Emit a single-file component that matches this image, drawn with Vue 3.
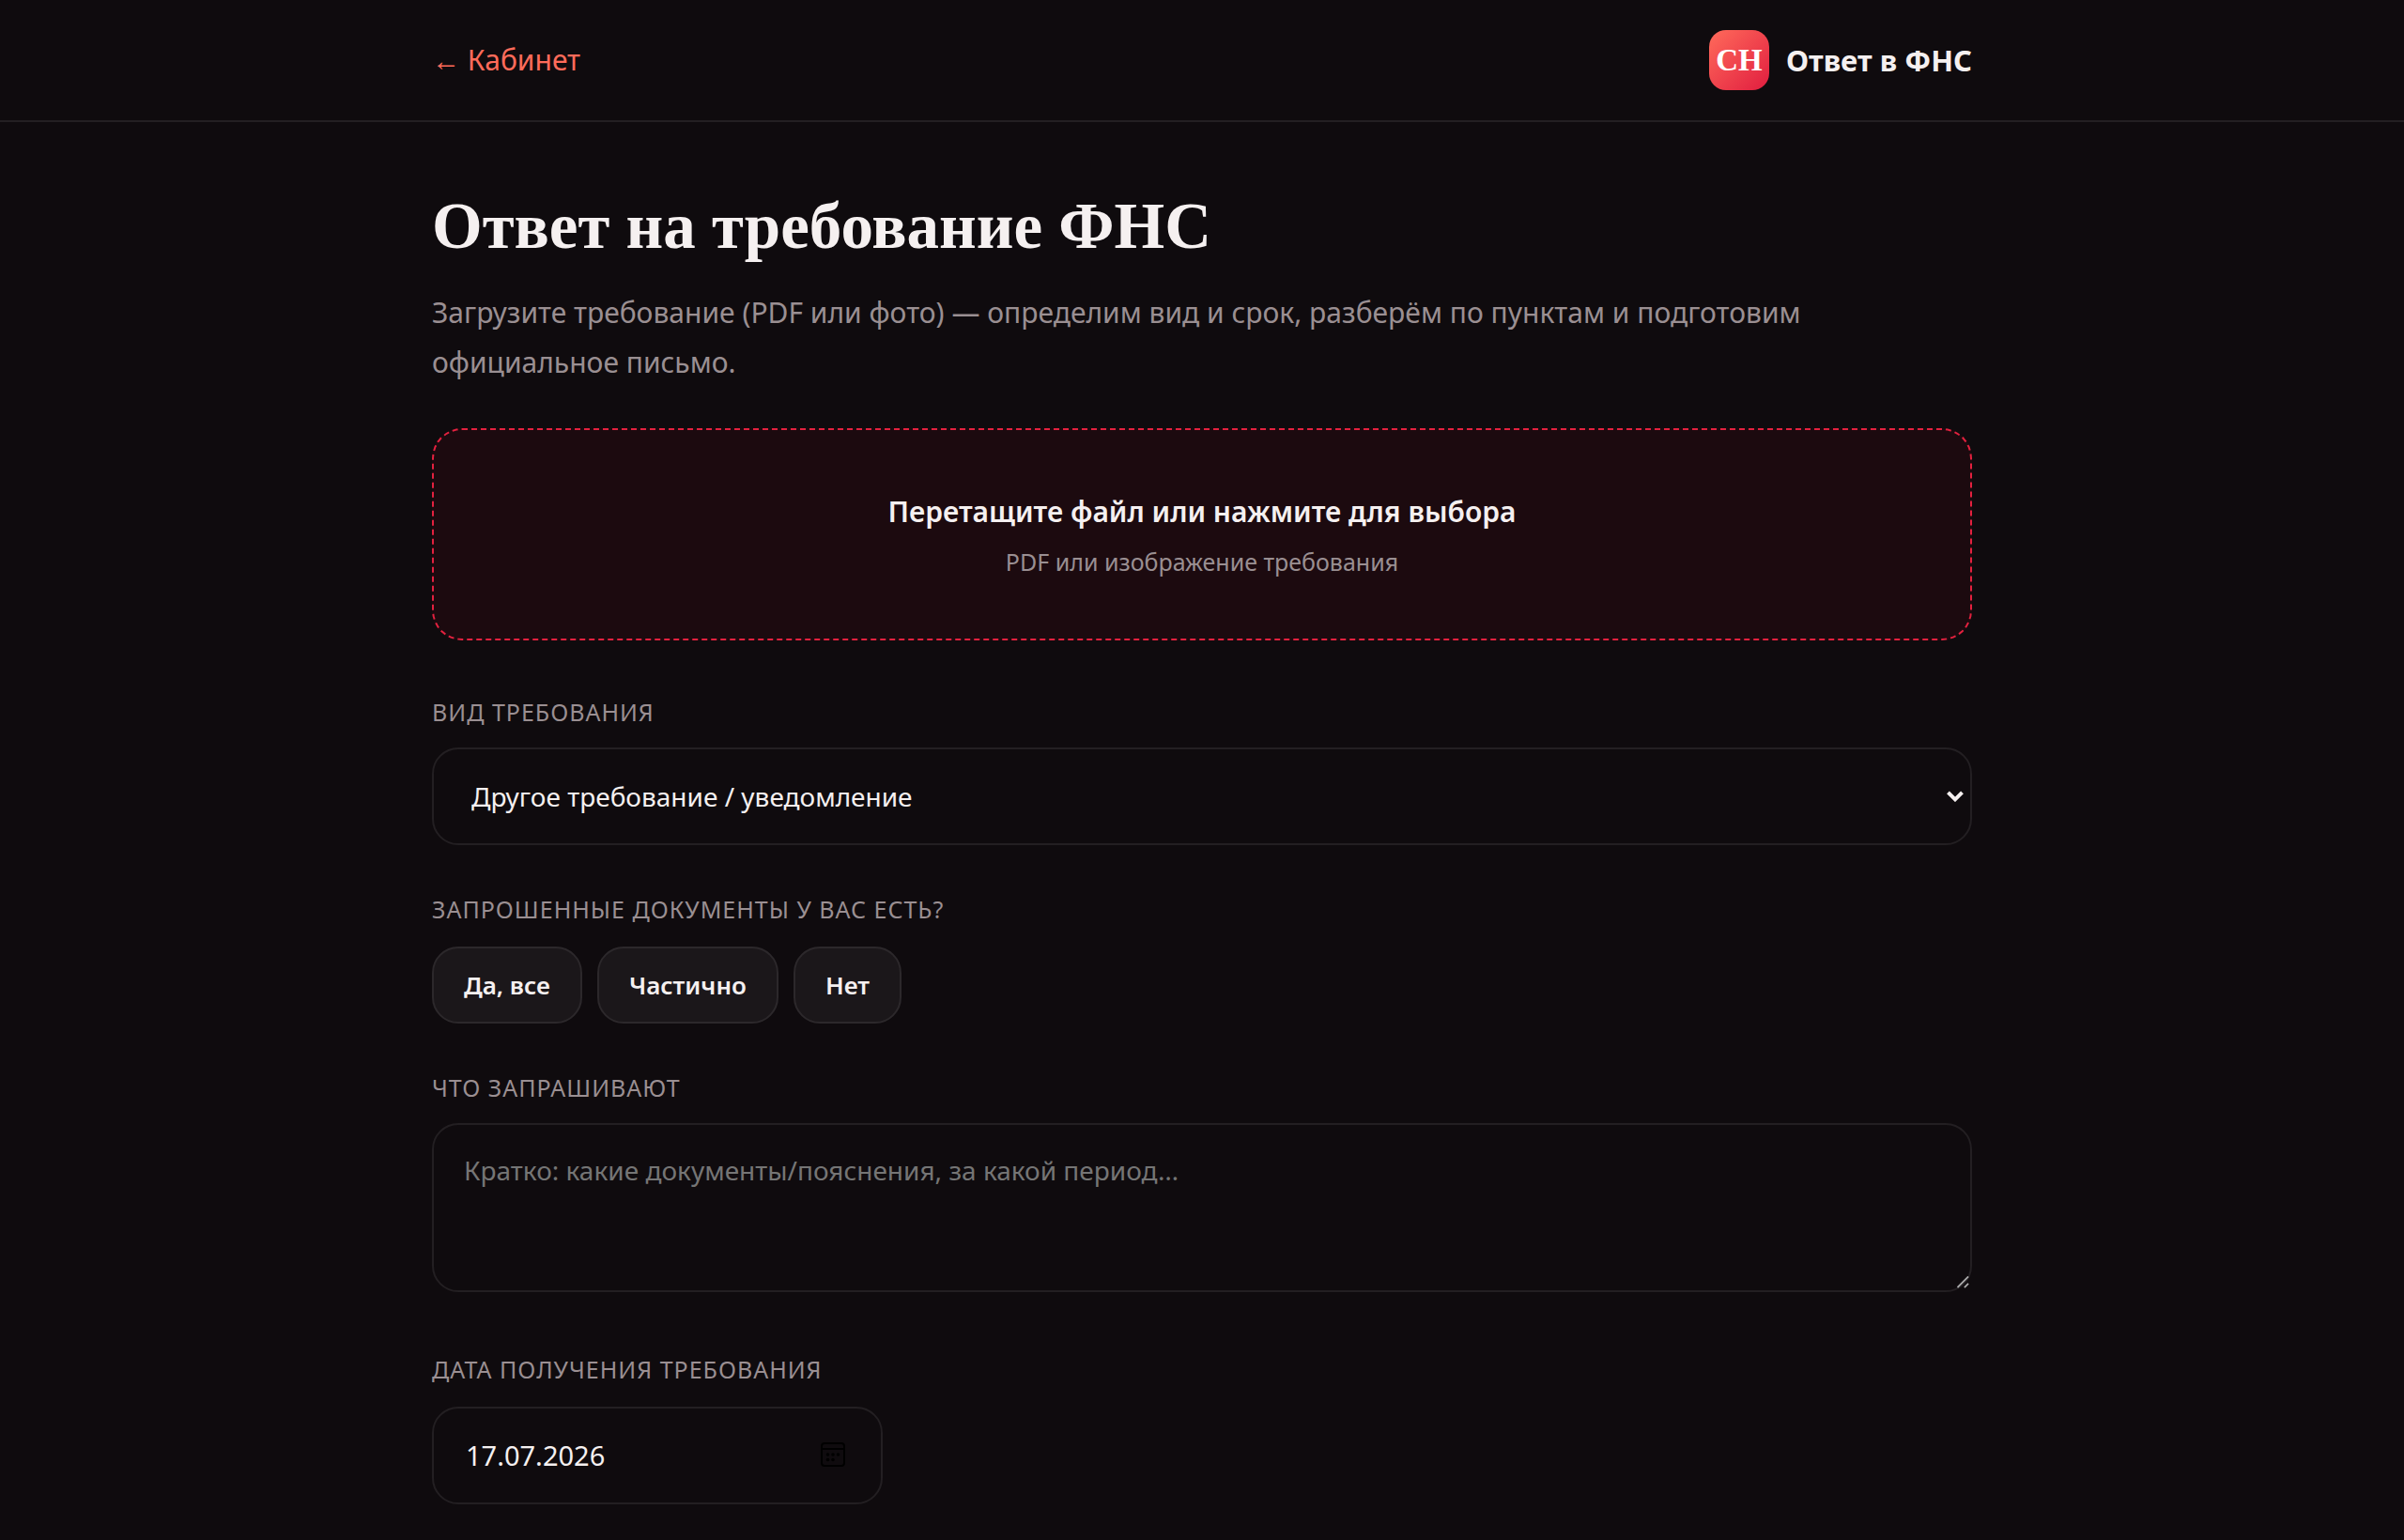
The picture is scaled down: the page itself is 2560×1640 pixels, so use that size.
<script setup>
import { ref } from 'vue'

const kinds = [
  'Другое требование / уведомление',
  'Требование о представлении документов',
  'Требование о представлении пояснений',
]
const answers = ['Да, все', 'Частично', 'Нет']

const kind = ref(kinds[0])
const answer = ref('')
const details = ref('')
const receivedAt = ref('17.07.2026')
</script>

<template>
  <div class="page">
    <header class="topbar">
      <div class="container topbar-inner">
        <a class="back" href="#">← Кабинет</a>
        <div class="brand">
          <span class="logo">СН</span>
          <span class="brand-name">Ответ в ФНС</span>
        </div>
      </div>
    </header>

    <main class="container content">
      <h1>Ответ на требование ФНС</h1>
      <p class="lead">
        Загрузите требование (PDF или фото) — определим вид и срок, разберём по пунктам и подготовим
        официальное письмо.
      </p>

      <button class="dropzone" type="button">
        <span class="drop-title">Перетащите файл или нажмите для выбора</span>
        <span class="drop-hint">PDF или изображение требования</span>
      </button>

      <form class="form" @submit.prevent>
        <div class="field">
          <label class="label" for="kind">Вид требования</label>
          <div class="control">
            <select id="kind" v-model="kind" class="box select">
              <option v-for="item in kinds" :key="item">{{ item }}</option>
            </select>
            <svg class="chevron" viewBox="0 0 18 12" aria-hidden="true">
              <path d="M1.5 1.8 9 9.3l7.500-7.500" fill="none" stroke="currentColor" stroke-width="4" />
            </svg>
          </div>
        </div>

        <div class="field field-roomy" role="group" aria-labelledby="docs-label">
          <span id="docs-label" class="label">Запрошенные документы у вас есть?</span>
          <div class="choices">
            <button
              v-for="item in answers"
              :key="item"
              type="button"
              class="choice"
              :aria-pressed="answer === item"
              @click="answer = item"
            >{{ item }}</button>
          </div>
        </div>

        <div class="field">
          <label class="label" for="details">Что запрашивают</label>
          <div class="control">
            <textarea
              id="details"
              v-model="details"
              class="box textarea"
              placeholder="Кратко: какие документы/пояснения, за какой период…"
            ></textarea>
            <svg class="grip" viewBox="0 0 14 14" aria-hidden="true">
              <path d="M0.500 13 13 0.500M8.500 13 13 8.500" fill="none" stroke="currentColor" stroke-width="2" />
            </svg>
          </div>
        </div>

        <div class="field field-roomy field-last">
          <label class="label" for="received">Дата получения требования</label>
          <div class="control control-date">
            <input id="received" v-model="receivedAt" class="box date" type="text" inputmode="numeric" />
            <svg class="calendar" viewBox="0 0 26 26" aria-hidden="true">
              <rect x="1" y="1" width="24" height="24" rx="3" fill="none" stroke="currentColor" stroke-width="2" />
              <path d="M1 7h24" stroke="currentColor" stroke-width="2" />
              <g fill="currentColor">
                <circle cx="7.500" cy="13" r="1.800" />
                <circle cx="13" cy="13" r="1.800" />
                <circle cx="18.500" cy="13" r="1.800" />
                <circle cx="7.500" cy="18.500" r="1.800" />
                <circle cx="13" cy="18.500" r="1.800" />
              </g>
            </svg>
          </div>
        </div>
      </form>
    </main>
  </div>
</template>

<style>
body {
  margin: 0;
  background: #0f0b0e;
}
</style>

<style scoped>
.page {
  min-height: 100vh;
  box-sizing: border-box;
  background: #0f0b0e;
  color: #f5f0f0;
  font-family: "Noto Sans", "Open Sans", sans-serif;
  font-size: 30px;
}

.container {
  box-sizing: border-box;
  width: 100%;
  max-width: 1640px;
  margin: 0 auto;
}

.topbar {
  border-bottom: 2px solid #231f22;
}

.topbar-inner {
  display: flex;
  align-items: center;
  justify-content: space-between;
  padding: 32px 0;
}

.back {
  color: #ff6b5a;
  line-height: 40px;
  text-decoration: none;
}

.brand {
  display: flex;
  align-items: center;
  gap: 18px;
}

.logo {
  width: 64px;
  border-radius: 18px;
  background: linear-gradient(135deg, #ff6b5b, #e11d3f);
  color: #fff;
  font: 700 33px/64px "Liberation Serif", serif;
  text-align: center;
}

.brand-name {
  font-size: 31px;
  font-weight: 700;
  line-height: 40px;
}

.content {
  padding: 70px 0 80px;
}

h1 {
  margin: 0 0 24px;
  font: 700 69px/82px "Liberation Serif", serif;
}

.lead {
  margin: 0 0 44px;
  color: #9a8f92;
  line-height: 53px;
}

.dropzone {
  display: flex;
  flex-direction: column;
  align-items: center;
  gap: 6px;
  box-sizing: border-box;
  width: 100%;
  margin: 0 0 56px;
  padding: 60px;
  border: 2px dashed #e3213f;
  border-radius: 32px;
  background: #1c0a0f;
  color: inherit;
  font-family: inherit;
  cursor: pointer;
}

.drop-title {
  font-size: 30px;
  font-weight: 600;
  line-height: 53px;
}

.drop-hint {
  color: #9a8f92;
  font-size: 25px;
  line-height: 43px;
}

.form {
  display: flex;
  flex-direction: column;
  gap: 48px;
}

.field {
  display: flex;
  flex-direction: column;
  gap: 18px;
}

.field-roomy {
  gap: 20px;
}

.field-last {
  margin-top: 14px;
}

.label {
  color: #9a8f92;
  font-size: 25px;
  line-height: 40px;
  letter-spacing: 1px;
  text-transform: uppercase;
}

.control {
  position: relative;
  display: flex;
}

.control-date {
  width: 480px;
  max-width: 100%;
}

.box {
  box-sizing: border-box;
  width: 100%;
  margin: 0;
  border: 2px solid #231f22;
  border-radius: 28px;
  outline: none;
  background: #0f0b0e;
  color: #f5f0f0;
  font-family: inherit;
  font-size: 28px;
  line-height: 40px;
}

.select {
  appearance: none;
  padding: 30px 40px;
}

.chevron {
  position: absolute;
  top: 46px;
  right: 9px;
  width: 18px;
  height: 12px;
  pointer-events: none;
}

.choices {
  display: flex;
  flex-wrap: wrap;
  gap: 16px;
}

.choice {
  padding: 19px 32px;
  border: 2px solid #2c282b;
  border-radius: 28px;
  background: #1b171a;
  color: inherit;
  font-family: inherit;
  font-size: 26px;
  font-weight: 600;
  line-height: 40px;
  cursor: pointer;
}

.textarea {
  display: block;
  height: 180px;
  padding: 28px 32px;
  resize: none;
}

.textarea::placeholder {
  color: #757575;
  opacity: 1;
}

.grip {
  position: absolute;
  right: 3px;
  bottom: 4px;
  width: 13px;
  height: 13px;
  color: #aaa;
  pointer-events: none;
}

.date {
  padding: 30px 34px;
  font-size: 29px;
}

.calendar {
  position: absolute;
  top: 38px;
  right: 40px;
  width: 26px;
  height: 26px;
  color: #000;
  pointer-events: none;
}
</style>
